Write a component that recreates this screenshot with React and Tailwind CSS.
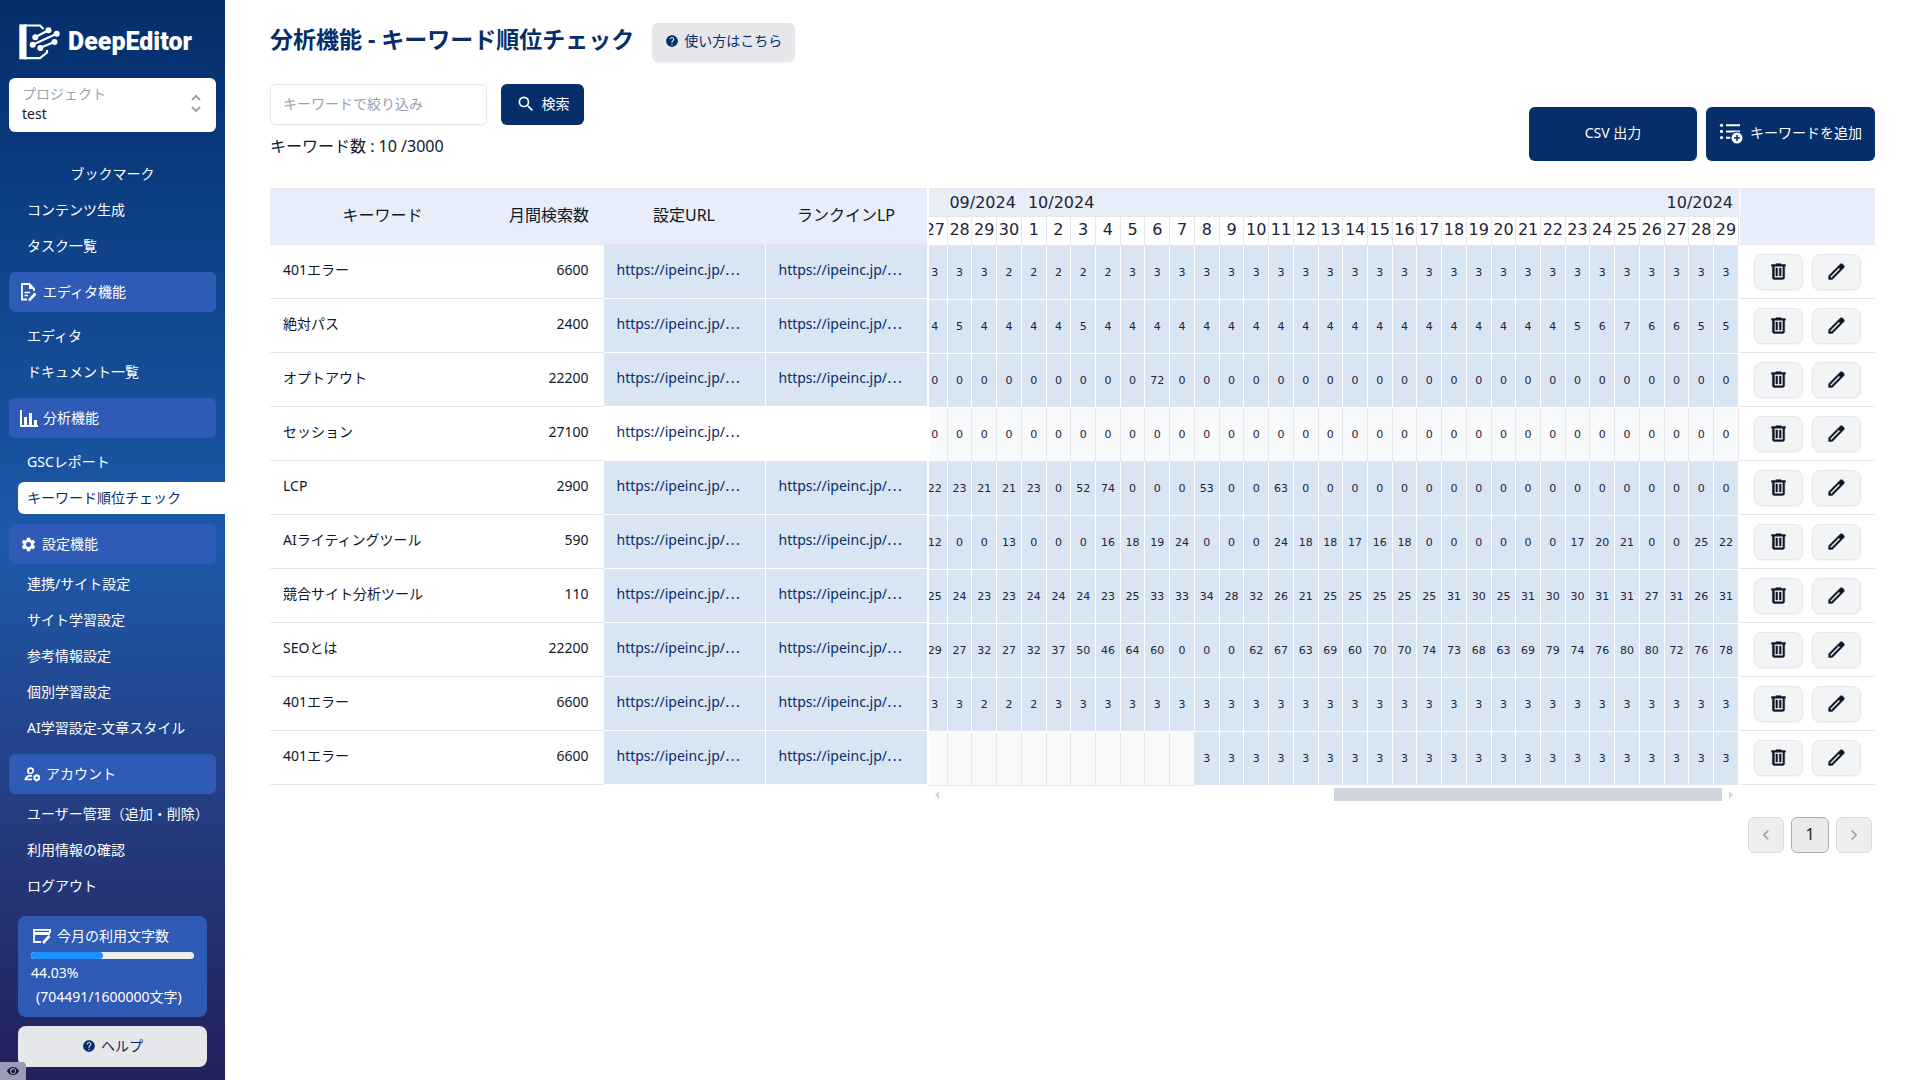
import React, { useState } from 'react';
import { MdHelp, MdSearch, MdSettings, MdChevronLeft, MdChevronRight } from 'react-icons/md';
import { FaEye } from 'react-icons/fa';

const DAYS = [
  27, 28, 29, 30, 1, 2, 3, 4, 5, 6, 7, 8, 9, 10, 11, 12, 13, 14, 15, 16, 17,
  18, 19, 20, 21, 22, 23, 24, 25, 26, 27, 28, 29,
];

const SITE = 'https://ipeinc.jp/';

const ROWS = [
  { keyword: '401エラー', volume: 6600, url: SITE, lp: SITE, ranks: '3 3 3 2 2 2 2 2 3 3 3 3 3 3 3 3 3 3 3 3 3 3 3 3 3 3 3 3 3 3 3 3 3' },
  { keyword: '絶対パス', volume: 2400, url: SITE, lp: SITE, ranks: '4 5 4 4 4 4 5 4 4 4 4 4 4 4 4 4 4 4 4 4 4 4 4 4 4 4 5 6 7 6 6 5 5' },
  { keyword: 'オプトアウト', volume: 22200, url: SITE, lp: SITE, ranks: '0 0 0 0 0 0 0 0 0 72 0 0 0 0 0 0 0 0 0 0 0 0 0 0 0 0 0 0 0 0 0 0 0' },
  { keyword: 'セッション', volume: 27100, url: SITE, lp: '', ranks: '0 0 0 0 0 0 0 0 0 0 0 0 0 0 0 0 0 0 0 0 0 0 0 0 0 0 0 0 0 0 0 0 0' },
  { keyword: 'LCP', volume: 2900, url: SITE, lp: SITE, ranks: '22 23 21 21 23 0 52 74 0 0 0 53 0 0 63 0 0 0 0 0 0 0 0 0 0 0 0 0 0 0 0 0 0' },
  { keyword: 'AIライティングツール', volume: 590, url: SITE, lp: SITE, ranks: '12 0 0 13 0 0 0 16 18 19 24 0 0 0 24 18 18 17 16 18 0 0 0 0 0 0 17 20 21 0 0 25 22' },
  { keyword: '競合サイト分析ツール', volume: 110, url: SITE, lp: SITE, ranks: '25 24 23 23 24 24 24 23 25 33 33 34 28 32 26 21 25 25 25 25 25 31 30 25 31 30 30 31 31 27 31 26 31' },
  { keyword: 'SEOとは', volume: 22200, url: SITE, lp: SITE, ranks: '29 27 32 27 32 37 50 46 64 60 0 0 0 62 67 63 69 60 70 70 74 73 68 63 69 79 74 76 80 80 72 76 78' },
  { keyword: '401エラー', volume: 6600, url: SITE, lp: SITE, ranks: '3 3 2 2 2 3 3 3 3 3 3 3 3 3 3 3 3 3 3 3 3 3 3 3 3 3 3 3 3 3 3 3 3' },
  { keyword: '401エラー', volume: 6600, url: SITE, lp: SITE, ranks: '- - - - - - - - - - - 3 3 3 3 3 3 3 3 3 3 3 3 3 3 3 3 3 3 3 3 3 3' },
];

function LogoMark() {
  return (
    <svg viewBox="0 0 42 38" className="h-[38px] w-[42px]" fill="none" stroke="white">
      <path d="M25.5 6 L22 2.5 H6 M6 35.2 H22 L29 29.5 V27" strokeWidth="2.2" />
      <path d="M1.3 1.4 H8.5 V36.3 H1.3 Z" fill="white" stroke="none" />
      <path d="M17.3 14.3 L30.3 7.3 M14.7 21.7 L38.7 10.7 M22.3 24.8 L36.3 19 M22.3 25 V28" strokeWidth="2.2" />
      <g fill="white" stroke="none">
        <circle cx="17.3" cy="14.3" r="3" />
        <circle cx="30.5" cy="7.3" r="3" />
        <circle cx="14.7" cy="21.7" r="3" />
        <circle cx="38.7" cy="10.7" r="3" />
        <circle cx="22.3" cy="25" r="3" />
        <circle cx="36.5" cy="19" r="3" />
      </g>
    </svg>
  );
}

function DocEditIcon() {
  return (
    <svg viewBox="0 0 18 20" className="h-5 w-[18px]" fill="none" stroke="white" strokeWidth="1.8">
      <path d="M7 17.5 H2 V2 H9.5 L14 6.5 V9" />
      <path d="M9 1.5 V7 H14.5 Z" fill="white" stroke="none" />
      <path d="M4.5 10.5 H10 M4.5 13.5 H8" strokeWidth="1.5" />
      <path d="M9 18.5 L15.5 11.5" strokeWidth="2.6" />
    </svg>
  );
}

function ChartIcon() {
  return (
    <svg viewBox="0 0 18 17" className="h-[17px] w-[18px]" fill="white">
      <path d="M0 0 H2 V15 H18 V17 H0 Z" />
      <path d="M4 7 H7 V15 H4 Z M9 3 H12 V15 H9 Z M14 10 H17 V15 H14 Z" />
    </svg>
  );
}

function AccountIcon() {
  return (
    <svg viewBox="0 0 17 15" className="ml-1 h-[15px] w-[17px]" fill="none" stroke="white">
      <circle cx="6.5" cy="3.8" r="2.7" strokeWidth="1.7" />
      <path d="M8 8.8 H5 Q2.5 9.2 1.5 12.3 H8" strokeWidth="1.7" />
      <circle cx="12.7" cy="10.7" r="2.2" strokeWidth="1.8" />
      <path d="M12.7 7 V8.4 M12.7 13 V14.5 M9.5 8.9 L10.8 9.6 M14.6 11.8 L15.9 12.5 M9.5 12.5 L10.8 11.8 M14.6 9.6 L15.9 8.9" strokeWidth="1.6" />
    </svg>
  );
}

function UsageIcon() {
  return (
    <svg viewBox="0 0 18 16" className="h-4 w-[18px]" fill="none" stroke="white" strokeWidth="1.8">
      <path d="M8 14 H1 V1.8 H17 V5" />
      <path d="M1 4 H17 V7 H1 Z" fill="white" stroke="none" />
      <path d="M10 15 L16.5 8" strokeWidth="2.6" />
    </svg>
  );
}

function ListAddIcon() {
  return (
    <svg viewBox="0 0 24 21" className="h-[21px] w-6" fill="white">
      <circle cx="2.5" cy="2.3" r="1.6" />
      <circle cx="2.5" cy="8.4" r="1.6" />
      <circle cx="2.5" cy="14.6" r="1.6" />
      <path d="M7 1.3 H21 V3.2 H7 Z M7 7.5 H21 V9.4 H7 Z M7 13.8 H11.5 V15.7 H7 Z" />
      <circle cx="18" cy="15" r="6.6" fill="#052e6b" />
      <circle cx="18" cy="15" r="5.5" />
      <path d="M18 12 V18 M15 15 H21" stroke="#052e6b" strokeWidth="1.5" />
    </svg>
  );
}

function TrashIcon() {
  return (
    <svg viewBox="0 0 24 24" className="h-[21px] w-[21px]" fill="currentColor" stroke="currentColor" strokeWidth="0.5">
      <path d="M7 21q-.825 0-1.412-.587T5 19V6H4V4h5V3h6v1h5v2h-1v13q0 .825-.587 1.413T17 21zM17 6H7v13h10zM9 17h2V8H9zm4 0h2V8h-2zM7 6v13z" />
    </svg>
  );
}

function PencilIcon() {
  return (
    <svg viewBox="0 0 24 24" className="h-[21px] w-[21px]" fill="currentColor" stroke="currentColor" strokeWidth="0.5">
      <path d="M5 19h1.425L16.2 9.225L14.775 7.8L5 17.575zm-2 2v-4.25L16.2 3.575q.3-.275.663-.425t.762-.15t.775.15t.65.45L20.425 5q.3.275.438.65T21 6.4q0 .4-.137.763t-.438.662L7.25 21z" />
    </svg>
  );
}

function NavSection({ icon, label, children }) {
  return (
    <section className="mt-2">
      <h2 className="mx-[9px] flex h-10 items-center gap-[5px] rounded-md bg-[#2f5ab5] pl-[11px] text-sm">
        {icon}
        {label}
      </h2>
      {children}
    </section>
  );
}

function NavItem({ children, active }) {
  return (
    <li className="flex h-9 items-center pl-[18px]">
      <a
        href="#"
        className={
          active
            ? 'flex h-8 w-full items-center rounded-l-md bg-white pl-[9px] text-[#052e6b]'
            : 'flex h-8 w-full items-center pl-[9px]'
        }
      >
        {children}
      </a>
    </li>
  );
}

function Sidebar() {
  return (
    <aside className="relative flex w-[225px] shrink-0 flex-col bg-linear-to-b from-[#052e6b] via-[#1c5aaa] to-[#22215c] pb-[13px] text-sm text-white">
      <a href="#" className="flex items-center gap-2 pt-[23px] pl-[18px]">
        <LogoMark />
        <span className="font-['Roboto'] text-[25px] leading-[38px] font-black">DeepEditor</span>
      </a>

      <button
        type="button"
        className="mx-[9px] mt-[17px] flex h-[54px] items-center justify-between rounded-md bg-white pr-3 pb-[2px] pl-[13px] text-left text-[#0f172a]"
      >
        <span>
          <span className="block leading-5 text-gray-400">プロジェクト</span>
          <span className="block leading-5">test</span>
        </span>
        <svg viewBox="0 0 16 20" className="h-5 w-4" fill="none" stroke="#9ca3af" strokeWidth="2">
          <path d="M4 6 L8 2 L12 6 M4 13 L8 17 L12 13" />
        </svg>
      </button>

      <nav>
        <p className="mt-6 flex h-9 items-center justify-center">ブックマーク</p>
        <ul>
          <NavItem>コンテンツ生成</NavItem>
          <NavItem>タスク一覧</NavItem>
        </ul>
        <NavSection icon={<DocEditIcon />} label="エディタ機能">
          <ul className="mt-[6px]">
            <NavItem>エディタ</NavItem>
            <NavItem>ドキュメント一覧</NavItem>
          </ul>
        </NavSection>
        <NavSection icon={<ChartIcon />} label="分析機能">
          <ul className="mt-[6px]">
            <NavItem>GSCレポート</NavItem>
            <NavItem active>キーワード順位チェック</NavItem>
          </ul>
        </NavSection>
        <NavSection icon={<MdSettings className="h-[17px] w-[17px]" />} label="設定機能">
          <ul className="mt-[2px]">
            <NavItem>連携/サイト設定</NavItem>
            <NavItem>サイト学習設定</NavItem>
            <NavItem>参考情報設定</NavItem>
            <NavItem>個別学習設定</NavItem>
            <NavItem>AI学習設定-文章スタイル</NavItem>
          </ul>
        </NavSection>
        <NavSection icon={<AccountIcon />} label="アカウント">
          <ul className="mt-[2px]">
            <NavItem>ユーザー管理（追加・削除）</NavItem>
            <NavItem>利用情報の確認</NavItem>
            <NavItem>ログアウト</NavItem>
          </ul>
        </NavSection>
      </nav>

      <div className="mx-[18px] mt-3 rounded-lg bg-[#2f5ab5] px-[13px] pt-2 pb-[9px]">
        <p className="flex items-center gap-[6px] pl-[2px] leading-6">
          <UsageIcon />
          今月の利用文字数
        </p>
        <div className="mt-1 h-[7px] overflow-hidden rounded-full bg-[#eeeeee]">
          <div className="h-full rounded-full bg-[#1e90ff]" style={{ width: '44.03%' }} />
        </div>
        <p className="mt-[2px] leading-6">44.03%</p>
        <p className="pl-[5px] leading-[23px]">(704491/1600000文字)</p>
      </div>

      <a
        href="#"
        className="mx-[18px] mt-[9px] flex h-[41px] items-center justify-center gap-[5px] rounded-lg bg-[#e5e7eb] pb-[2px] text-[#052e6b]"
      >
        <MdHelp className="h-[14px] w-[14px]" />
        ヘルプ
      </a>

      <button
        type="button"
        aria-label="表示"
        className="absolute bottom-0 left-0 flex h-[18px] w-[26px] items-center justify-center rounded-tr-sm bg-[#9a9bb5] text-[#14163a]"
      >
        <FaEye className="h-3 w-3" />
      </button>
    </aside>
  );
}

function UrlLink({ children }) {
  return (
    <a href="#" className="text-[#052e6b]">
      {children}
      <span className="font-['Noto_Sans_CJK_JP']">⋯</span>
    </a>
  );
}

function UrlCell({ url, highlight }) {
  return (
    <td
      className={
        highlight
          ? 'border-b border-l border-white bg-[#d9e5f3] p-0 pb-1 pl-[13px]'
          : 'border-b border-l border-white p-0 pb-1 pl-[13px]'
      }
    >
      {url && <UrlLink>{url}</UrlLink>}
    </td>
  );
}

function KeywordTable() {
  return (
    <table className="w-[657px] shrink-0 table-fixed border-collapse text-[#0f172a]">
      <thead>
        <tr className="h-14 border-y border-gray-200 bg-[#e7eef9]">
          <th className="w-[225px] p-0 pb-[3px] font-normal">キーワード</th>
          <th className="w-[108px] p-0 pr-[14px] pb-[3px] text-right font-normal">月間検索数</th>
          <th className="w-[162px] p-0 pb-[3px] font-normal">設定URL</th>
          <th className="w-[162px] p-0 pb-[3px] font-normal">ランクインLP</th>
        </tr>
      </thead>
      <tbody className="text-sm">
        {ROWS.map((row, i) => (
          <tr key={i} className="h-[54px]">
            <td className="border-b border-gray-200 p-0 pb-1 pl-[13px]">{row.keyword}</td>
            <td className="border-b border-gray-200 p-0 pr-[14px] pb-1 text-right">{row.volume}</td>
            <UrlCell url={row.url} highlight={Boolean(row.lp)} />
            <UrlCell url={row.lp} highlight={Boolean(row.lp)} />
          </tr>
        ))}
      </tbody>
    </table>
  );
}

// Row without a ranking LP, or a day without data, stays grey
function rankClass(row, rank) {
  if (!row.lp || rank === '-') {
    return 'border border-gray-200 bg-[#f9fafb] p-0 pt-[2px] text-center';
  }
  return 'border border-white bg-[#d9e5f3] p-0 pt-[2px] text-center';
}

function RankTable() {
  return (
    <div className="ml-[2px] min-w-0 flex-1">
      <div className="flex justify-end overflow-hidden">
        <table className="w-[817px] shrink-0 table-fixed border-collapse font-['DejaVu_Sans'] text-base text-[#1e2433]">
          <thead>
            <tr className="h-7 border border-gray-200 bg-[#e7eef9]">
              <th colSpan={4} className="border border-gray-200 p-0 pr-[5px] text-right font-normal">09/2024</th>
              <th colSpan={29} className="border border-gray-200 p-0 font-normal">
                <div className="flex justify-between pr-[5px] pl-[6px]">
                  <span>10/2024</span>
                  <span>10/2024</span>
                </div>
              </th>
            </tr>
            <tr className="h-[29px]">
              {DAYS.map((day, i) => (
                <th key={i} className="border border-gray-200 p-0 pb-[2px] text-center font-normal">{day}</th>
              ))}
            </tr>
          </thead>
          <tbody className="text-[11px]">
            {ROWS.map((row, i) => (
              <tr key={i} className="h-[54px]">
                {row.ranks.split(' ').map((rank, j) => (
                  <td key={j} className={rankClass(row, rank)}>{rank === '-' ? '' : rank}</td>
                ))}
              </tr>
            ))}
          </tbody>
        </table>
      </div>
      <div className="mt-[2px] flex h-[13px] items-center px-[6px]">
        <svg viewBox="0 0 4 8" className="h-2 w-1" fill="#d1d3dc">
          <path d="M4 0 V8 L0 4 Z" />
        </svg>
        <div className="flex h-full flex-1 justify-end px-[7px]">
          <div className="h-full w-1/2 bg-[#d1d3dc]" />
        </div>
        <svg viewBox="0 0 4 8" className="h-2 w-1" fill="#d1d3dc">
          <path d="M0 0 V8 L4 4 Z" />
        </svg>
      </div>
    </div>
  );
}

function ActionButton({ label, children }) {
  return (
    <button
      type="button"
      aria-label={label}
      className="flex h-9 w-[49px] items-center justify-center rounded-lg border border-gray-200 bg-[#f3f4f6] text-[#0f172a] shadow-xs"
    >
      {children}
    </button>
  );
}

function ActionTable() {
  return (
    <div className="ml-px w-[135px] shrink-0">
      <div className="h-[57px] border-y border-gray-200 bg-[#e7eef9]" />
      {ROWS.map((row, i) => (
        <div key={i} className="flex h-[54px] items-center gap-[9px] border-b border-gray-200 pl-[14px]">
          <ActionButton label="削除"><TrashIcon /></ActionButton>
          <ActionButton label="編集"><PencilIcon /></ActionButton>
        </div>
      ))}
    </div>
  );
}

export default function App() {
  const [filter, setFilter] = useState('');

  return (
    <div className="flex min-h-screen bg-white font-['Noto_Sans','Noto_Sans_CJK_JP',sans-serif] text-base text-[#0f172a]">
      <Sidebar />

      <main className="min-w-0 flex-1 pt-[23px] pr-[45px] pl-[45px]">
        <div className="flex items-start gap-[18px]">
          <h1 className="text-[23px] leading-8 font-bold text-[#052e6b]">分析機能 - キーワード順位チェック</h1>
          <a
            href="#"
            className="flex h-[39px] items-center gap-[5px] rounded-md bg-[#e5e7eb] px-[13px] pb-[3px] text-sm text-[#052e6b] shadow-xs"
          >
            <MdHelp className="h-[14px] w-[14px]" />
            使い方はこちら
          </a>
        </div>

        <div className="mt-[22px] flex justify-between">
          <div>
            <form className="flex gap-[14px]" onSubmit={(e) => e.preventDefault()}>
              <input
                type="text"
                aria-label="キーワードで絞り込み"
                placeholder="キーワードで絞り込み"
                value={filter}
                onChange={(e) => setFilter(e.target.value)}
                className="h-[41px] w-[217px] rounded-md border border-gray-200 px-3 pb-[3px] text-sm shadow-xs placeholder:text-gray-400"
              />
              <button
                type="submit"
                className="flex h-[41px] w-[83px] items-center justify-center gap-[6px] rounded-md bg-[#052e6b] pb-[2px] text-sm text-white"
              >
                <MdSearch className="h-5 w-5" />
                検索
              </button>
            </form>
            <p className="mt-[9px] leading-6">キーワード数 : 10 /3000</p>
          </div>
          <div className="mt-[23px] flex gap-[9px] text-sm text-white">
            <button type="button" className="h-[54px] w-[168px] rounded-md bg-[#052e6b] pb-[2px]">CSV 出力</button>
            <button
              type="button"
              className="flex h-[54px] w-[169px] items-center justify-center gap-[7px] rounded-md bg-[#052e6b] pb-[2px]"
            >
              <ListAddIcon />
              キーワードを追加
            </button>
          </div>
        </div>

        <div className="mt-[27px] flex items-start">
          <KeywordTable />
          <RankTable />
          <ActionTable />
        </div>

        <div className="mt-4 flex justify-end gap-[7px] pr-[3px]">
          <button
            type="button"
            aria-label="前へ"
            className="flex h-9 w-9 items-center justify-center rounded-md border border-[#dadbdd] bg-[#edeef0] text-[#a3a5a9]"
          >
            <MdChevronLeft className="h-5 w-5" />
          </button>
          <button
            type="button"
            className="flex h-9 w-[38px] items-center justify-center rounded-md border border-[#adadad] bg-[#e9e9e9] pb-[2px] text-[#222222]"
          >
            1
          </button>
          <button
            type="button"
            aria-label="次へ"
            className="flex h-9 w-9 items-center justify-center rounded-md border border-[#dadbdd] bg-[#edeef0] text-[#a3a5a9]"
          >
            <MdChevronRight className="h-5 w-5" />
          </button>
        </div>
      </main>
    </div>
  );
}
